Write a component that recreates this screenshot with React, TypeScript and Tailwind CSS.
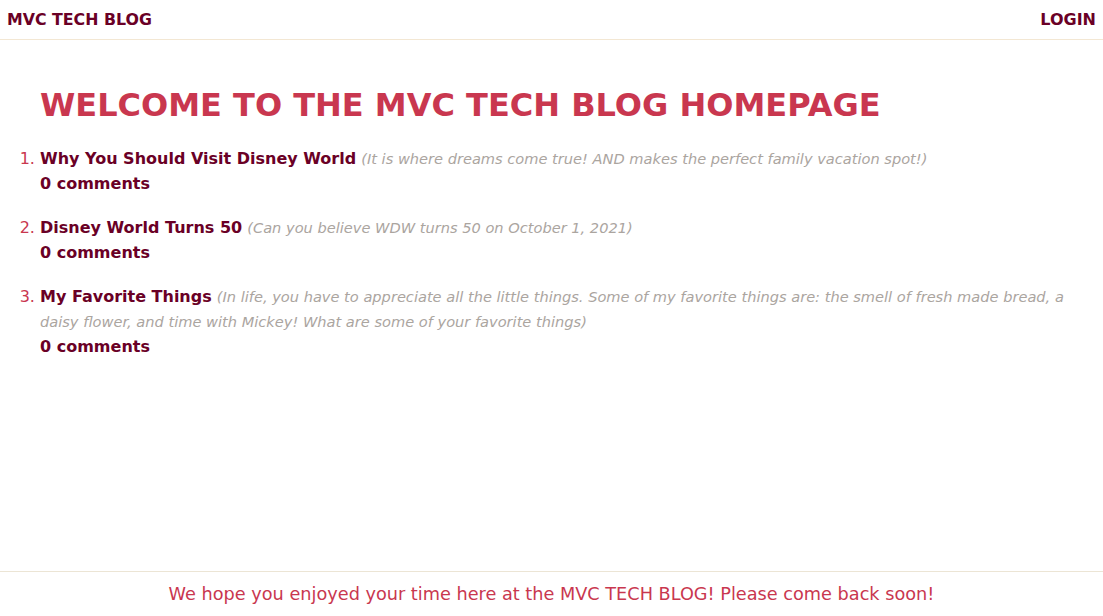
import React from "react";

const posts = [
  {
    title: "Why You Should Visit Disney World",
    desc: "(It is where dreams come true! AND makes the perfect family vacation spot!)",
  },
  {
    title: "Disney World Turns 50",
    desc: "(Can you believe WDW turns 50 on October 1, 2021)",
  },
  {
    title: "My Favorite Things",
    desc: "(In life, you have to appreciate all the little things. Some of my favorite things are: the smell of fresh made bread, a daisy flower, and time with Mickey! What are some of your favorite things)",
  },
];

export default function App() {
  return (
    <div
      className="min-h-screen flex flex-col bg-white"
      style={{ fontFamily: '"DejaVu Sans", Verdana, sans-serif' }}
    >
      <header className="h-[40px] flex items-center justify-between px-[7px] border-b border-[#f3e7d3]">
        <a className="text-[15.8px] font-bold text-[#6a0026]">MVC TECH BLOG</a>
        <a className="text-[16px] font-bold text-[#6a0026]">LOGIN</a>
      </header>
      <main className="flex-1 pl-[40px] pr-[20px] pt-[43px]">
        <h1 className="text-[32px] leading-[44px] font-bold text-[#c9374f]">
          WELCOME TO THE MVC TECH BLOG HOMEPAGE
        </h1>
        <ol className="list-decimal mt-[19px] marker:text-[#c9374f] marker:font-normal flex flex-col gap-[19px]">
          {posts.map((p) => (
            <li key={p.title} className="text-[16px] leading-[25px]">
              <a className="font-bold text-[#6a0026]">{p.title}</a>{" "}
              <span className="italic text-[14.6px] text-[#aba59f]">{p.desc}</span>
              <div className="font-bold text-[#6a0026]">0 comments</div>
            </li>
          ))}
        </ol>
      </main>
      <footer className="h-[45px] flex items-center justify-center border-t border-[#ece5d5]">
        <p className="text-[17.7px] text-[#c9374f]">
          We hope you enjoyed your time here at the MVC TECH BLOG! Please come back soon!
        </p>
      </footer>
    </div>
  );
}
